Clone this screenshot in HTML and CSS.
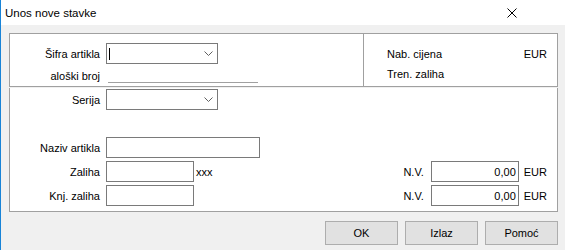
FILE: index.html
```html
<!DOCTYPE html>
<html lang="hr">
<head>
    <meta charset="UTF-8">
    <meta name="viewport" content="width=device-width, initial-scale=1.0">
    <title>Unos nove stavke</title>
    <link rel="stylesheet" href="styles.css">
</head>
<body>
    <div class="window">
        <div class="titlebar">
            <span class="title">Unos nove stavke</span>
            <span class="close">
                <svg viewBox="0 0 10 10">
                    <line x1="0.5" y1="0.5" x2="9.5" y2="9.5"></line>
                    <line x1="9.5" y1="0.5" x2="0.5" y2="9.5"></line>
                </svg>
            </span>
        </div>

        <div class="content">
            <div class="panel-top">
                <div class="top-left">
                    <div class="row">
                        <span class="lbl">Šifra artikla</span>
                        <div class="combo">
                            <span class="caret"></span>
                            <svg class="chevron" viewBox="0 0 9 5">
                                <polyline points="0.5 0.5 4.5 4.5 8.5 0.5"></polyline>
                            </svg>
                        </div>
                    </div>
                    <div class="row row-kat">
                        <span class="lbl lbl-kat">aloški broj</span>
                        <div class="underline"></div>
                    </div>
                </div>
                <div class="top-right">
                    <div class="info-row"><span>Nab. cijena</span><span>EUR</span></div>
                    <div class="info-row"><span>Tren. zaliha</span></div>
                </div>
            </div>

            <div class="panel-bottom">
                <div class="row">
                    <span class="lbl">Serija</span>
                    <div class="combo">
                        <svg class="chevron" viewBox="0 0 9 5">
                            <polyline points="0.5 0.5 4.5 4.5 8.5 0.5"></polyline>
                        </svg>
                    </div>
                </div>

                <div class="row row-naziv">
                    <span class="lbl">Naziv artikla</span>
                    <input type="text" class="field field-wide">
                </div>

                <div class="row row-tight">
                    <span class="lbl">Zaliha</span>
                    <input type="text" class="field field-short">
                    <span class="unit">xxx</span>
                    <div class="nv-group">
                        <span class="nv-lbl">N.V.</span>
                        <input type="text" class="field field-num" value="0,00">
                        <span class="currency">EUR</span>
                    </div>
                </div>

                <div class="row row-tight">
                    <span class="lbl">Knj. zaliha</span>
                    <input type="text" class="field field-short">
                    <div class="nv-group">
                        <span class="nv-lbl">N.V.</span>
                        <input type="text" class="field field-num" value="0,00">
                        <span class="currency">EUR</span>
                    </div>
                </div>
            </div>

            <div class="buttons">
                <button class="btn">OK</button>
                <button class="btn">Izlaz</button>
                <button class="btn">Pomoć</button>
            </div>
        </div>
    </div>
</body>
</html>
```

FILE: styles.css
```css
body {
    margin: 0;
    font-family: "Liberation Sans", Arial, sans-serif;
    font-size: 11px;
    color: #000;
    background-color: #f0f0f0;
}

.window {
    height: 250px;
    border-left: 1px solid #1883d7;
    background-color: #f0f0f0;
}

.titlebar {
    height: 25px;
    background-color: white;
    display: flex;
    align-items: center;
    justify-content: space-between;
    padding-left: 4px;
}

.title {
    font-size: 11.5px;
}

.close {
    width: 10px;
    height: 10px;
    margin-right: 48px;
    display: flex;
}

.close svg {
    width: 10px;
    height: 10px;
    stroke: #000;
    stroke-width: 1px;
}

.content {
    padding: 8px 7px 0 8px;
}

.panel-top {
    height: 54px;
    box-sizing: border-box;
    border: 1px solid #a0a0a0;
    background-color: white;
    display: flex;
}

.top-left {
    width: 354px;
    box-sizing: border-box;
    border-right: 1px solid #a0a0a0;
    padding-top: 9px;
}

.top-right {
    flex: 1;
    padding: 10px 10px 0 23px;
}

.info-row {
    display: flex;
    justify-content: space-between;
    line-height: 20px;
}

.row {
    display: flex;
    align-items: center;
}

.lbl {
    width: 90px;
    margin-right: 6px;
    text-align: right;
    white-space: nowrap;
}

.row-kat {
    margin-top: 4px;
    align-items: flex-end;
}

.lbl-kat {
    line-height: 13px;
}

.underline {
    width: 150px;
    height: 15px;
    margin-left: 2px;
    box-sizing: border-box;
    border-bottom: 1px solid #a0a0a0;
}

.combo {
    width: 112px;
    height: 21px;
    box-sizing: border-box;
    border: 1px solid #7a7a7a;
    background-color: white;
    display: flex;
    align-items: center;
    justify-content: space-between;
    padding: 0 4px 0 2px;
}

.caret {
    width: 1px;
    height: 12px;
    background-color: #000;
}

.chevron {
    width: 9px;
    height: 5px;
    margin-left: auto;
    fill: none;
    stroke: #606060;
    stroke-width: 1px;
}

.panel-bottom {
    margin-top: 1px;
    border: 1px solid #a0a0a0;
    border-top: none;
    background-color: white;
    padding: 1px 10px 5px 0;
}

.row-naziv {
    margin-top: 27px;
}

.row-tight {
    margin-top: 3px;
}

.field {
    height: 21px;
    box-sizing: border-box;
    border: 1px solid #7a7a7a;
    background-color: white;
    font-family: inherit;
    font-size: 11px;
    margin: 0;
    padding: 0 2px;
    outline: none;
}

.field-wide {
    width: 154px;
}

.field-short {
    width: 88px;
}

.field-num {
    width: 88px;
    text-align: right;
}

.unit {
    margin-left: 2px;
}

.nv-group {
    margin-left: auto;
    display: flex;
    align-items: center;
}

.nv-lbl {
    margin-right: 7px;
}

.currency {
    margin-left: 5px;
}

.buttons {
    margin-top: 9px;
    display: flex;
    justify-content: flex-end;
    gap: 7px;
}

.btn {
    width: 73px;
    height: 24px;
    border: 1px solid #adadad;
    background-color: #e1e1e1;
    font-family: inherit;
    font-size: 11px;
    color: #000;
    padding: 0;
}
```
